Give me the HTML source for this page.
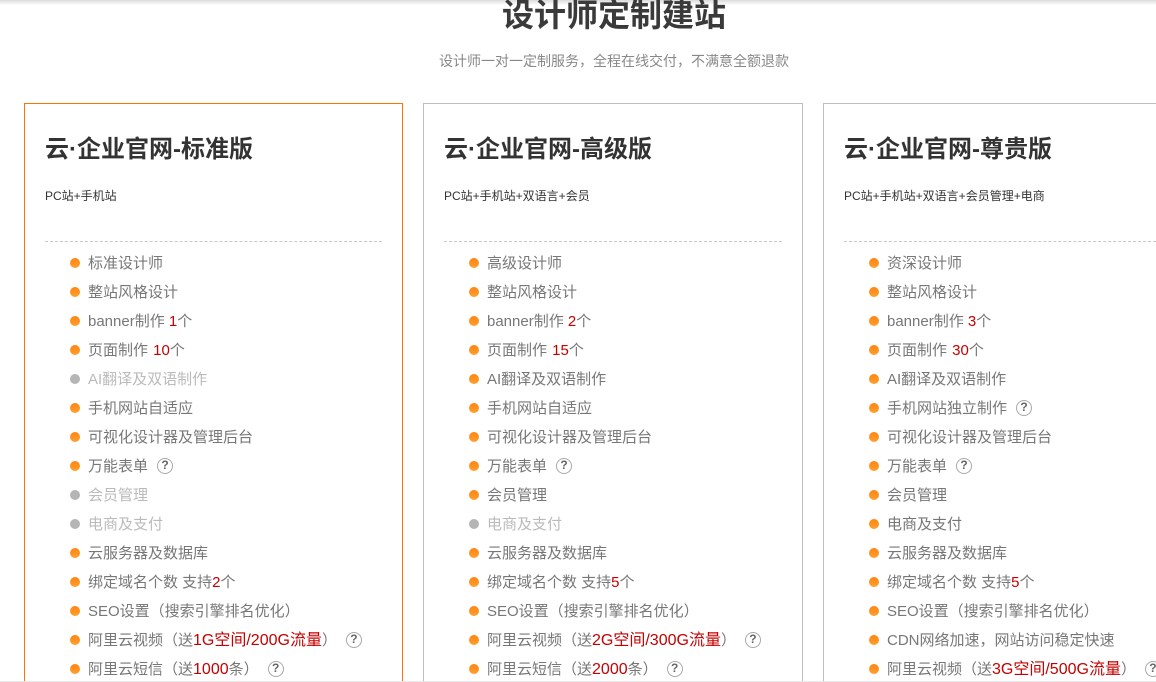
<!DOCTYPE html>
<html lang="zh-CN">
<head>
<meta charset="utf-8">
<title>设计师定制建站</title>
<style>
html,body{margin:0;padding:0;background:#fff;width:1156px;height:682px;overflow:hidden}
body{position:relative;font-family:"Liberation Sans","Noto Sans CJK SC",sans-serif;color:#333}
.wrap{position:absolute;left:0;top:0;width:1156px;height:682px;overflow:hidden}
.shadow{position:absolute;left:0;top:0;width:1156px;height:5px;background:linear-gradient(#dcdcdc,#fff)}
.foot{position:absolute;left:0;top:681px;width:1156px;height:1px;background:#e8e8e8;z-index:3}
h1{position:absolute;left:0;top:-8px;width:1228px;height:38px;overflow:hidden;margin:0;padding-top:0;text-align:center;font-size:32px;line-height:46px;font-weight:700;color:#3a3a3a;z-index:2}
.sub{position:absolute;left:0;top:52px;width:1228px;text-align:center;font-size:14px;line-height:18px;color:#888}
.card{position:absolute;top:103px;width:377px;height:578px;border:1px solid #bdbdbd;border-bottom:0;overflow:hidden}
.c1{left:24px;border-color:#ff7300}.c2{left:423px;width:378px}.c3{left:823px;width:332px;border-right:0}
.card h2{position:absolute;left:20px;top:29px;margin:0;font-size:24px;line-height:34px;font-weight:700;color:#333;white-space:nowrap}
.card p{position:absolute;left:20px;top:83px;margin:0;font-size:12px;line-height:18px;color:#333;white-space:nowrap}
.line{position:absolute;left:20px;top:137px;width:337px;border-top:1px dashed #c8c8c8}
.c2 .line{width:338px}
.c3 .line{width:312px}
ul{position:absolute;left:45px;top:145px;margin:0;padding:0;list-style:none}
li{position:relative;height:29px;line-height:29px;padding-left:18px;font-size:15px;color:#777;white-space:nowrap}
li:last-child{height:28px;overflow:hidden}
li:before{content:"";position:absolute;left:0;top:9px;width:10px;height:10px;border-radius:50%;background:linear-gradient(#ff8412,#ffa02e)}
li.off{color:#bbb}
li.off:before{background:#b5b5b5}
b{font-weight:400;color:#c40000}
b.m{margin-left:1px}
b.l{font-size:16px}
i{display:inline-block;vertical-align:top;position:relative;top:6px;box-sizing:border-box;width:16px;height:16px;border:1.5px solid #a8a8a8;border-radius:50%;margin-left:9px;font-style:normal;font-weight:700;font-size:12px;line-height:13px;text-align:center;color:#666}
</style>
</head>
<body>
<div class="wrap">
<div class="shadow"></div>
<h1>设计师定制建站</h1>
<div class="sub">设计师一对一定制服务，全程在线交付，不满意全额退款</div>

<div class="card c1">
<h2>云·企业官网-标准版</h2>
<p>PC站+手机站</p>
<div class="line"></div>
<ul>
<li>标准设计师</li>
<li>整站风格设计</li>
<li>banner制作 <b>1</b>个</li>
<li>页面制作 <b class="m">10</b>个</li>
<li class="off">AI翻译及双语制作</li>
<li>手机网站自适应</li>
<li>可视化设计器及管理后台</li>
<li>万能表单<i>?</i></li>
<li class="off">会员管理</li>
<li class="off">电商及支付</li>
<li>云服务器及数据库</li>
<li>绑定域名个数 支持<b>2</b>个</li>
<li>SEO设置（搜索引擎排名优化）</li>
<li>阿里云视频（送<b class="l">1G空间/200G流量</b>）<i>?</i></li>
<li>阿里云短信（送<b class="l">1000</b>条）<i>?</i></li>
</ul>
</div>

<div class="card c2">
<h2>云·企业官网-高级版</h2>
<p>PC站+手机站+双语言+会员</p>
<div class="line"></div>
<ul>
<li>高级设计师</li>
<li>整站风格设计</li>
<li>banner制作 <b>2</b>个</li>
<li>页面制作 <b class="m">15</b>个</li>
<li>AI翻译及双语制作</li>
<li>手机网站自适应</li>
<li>可视化设计器及管理后台</li>
<li>万能表单<i>?</i></li>
<li>会员管理</li>
<li class="off">电商及支付</li>
<li>云服务器及数据库</li>
<li>绑定域名个数 支持<b>5</b>个</li>
<li>SEO设置（搜索引擎排名优化）</li>
<li>阿里云视频（送<b class="l">2G空间/300G流量</b>）<i>?</i></li>
<li>阿里云短信（送<b class="l">2000</b>条）<i>?</i></li>
</ul>
</div>

<div class="card c3">
<h2>云·企业官网-尊贵版</h2>
<p>PC站+手机站+双语言+会员管理+电商</p>
<div class="line"></div>
<ul>
<li>资深设计师</li>
<li>整站风格设计</li>
<li>banner制作 <b>3</b>个</li>
<li>页面制作 <b class="m">30</b>个</li>
<li>AI翻译及双语制作</li>
<li>手机网站独立制作<i>?</i></li>
<li>可视化设计器及管理后台</li>
<li>万能表单<i>?</i></li>
<li>会员管理</li>
<li>电商及支付</li>
<li>云服务器及数据库</li>
<li>绑定域名个数 支持<b>5</b>个</li>
<li>SEO设置（搜索引擎排名优化）</li>
<li>CDN网络加速，网站访问稳定快速</li>
<li>阿里云视频（送<b class="l">3G空间/500G流量</b>）<i>?</i></li>
</ul>
</div>
<div class="foot"></div>
</div>
</body>
</html>
